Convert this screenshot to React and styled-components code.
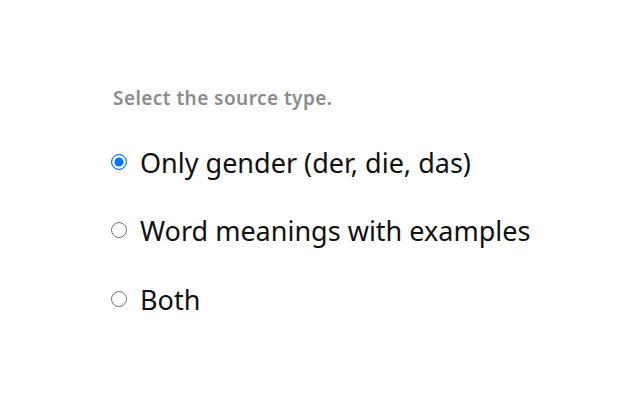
import React, { useState } from "react";
import styled, { createGlobalStyle } from "styled-components";

const GlobalStyle = createGlobalStyle`
  html, body { margin: 0; padding: 0; background: #ffffff; }
  body { font-family: "Noto Sans", "Open Sans", sans-serif; }
`;

const Page = styled.main`
  width: 640px;
  height: 400px;
  box-sizing: border-box;
  padding: 86px 0 0 111px;
  display: flex;
  flex-direction: column;
`;

const Heading = styled.p`
  margin: 0 0 34.5px 2px;
  font-size: 19px;
  line-height: 24px;
  font-weight: 600;
  letter-spacing: 0.45px;
  color: #8c8c8c;
`;

const Options = styled.div`
  display: flex;
  flex-direction: column;
  gap: 32.5px;
`;

const Option = styled.label`
  display: flex;
  align-items: center;
  gap: 13px;
  font-size: 27px;
  line-height: 36px;
  color: #111111;
  cursor: pointer;
`;

const Radio = styled.input.attrs({ type: "radio" })`
  appearance: none;
  -webkit-appearance: none;
  box-sizing: border-box;
  width: 16px;
  height: 16px;
  margin: 0 0 2px 0;
  flex: none;
  border-radius: 50%;
  border: 1px solid #767676;
  background: #ffffff;
  cursor: pointer;

  &:checked {
    border: 1.5px solid #0075ff;
    background: #0075ff;
    box-shadow: inset 0 0 0 2.5px #ffffff;
  }
`;

const choices = [
  "Only gender (der, die, das)",
  "Word meanings with examples",
  "Both",
];

export default function App() {
  const [value, setValue] = useState(0);
  return (
    <Page>
      <GlobalStyle />
      <Heading>Select the source type.</Heading>
      <Options>
        {choices.map((c, i) => (
          <Option key={c}>
            <Radio
              name="source"
              checked={value === i}
              onChange={() => setValue(i)}
            />
            {c}
          </Option>
        ))}
      </Options>
    </Page>
  );
}
